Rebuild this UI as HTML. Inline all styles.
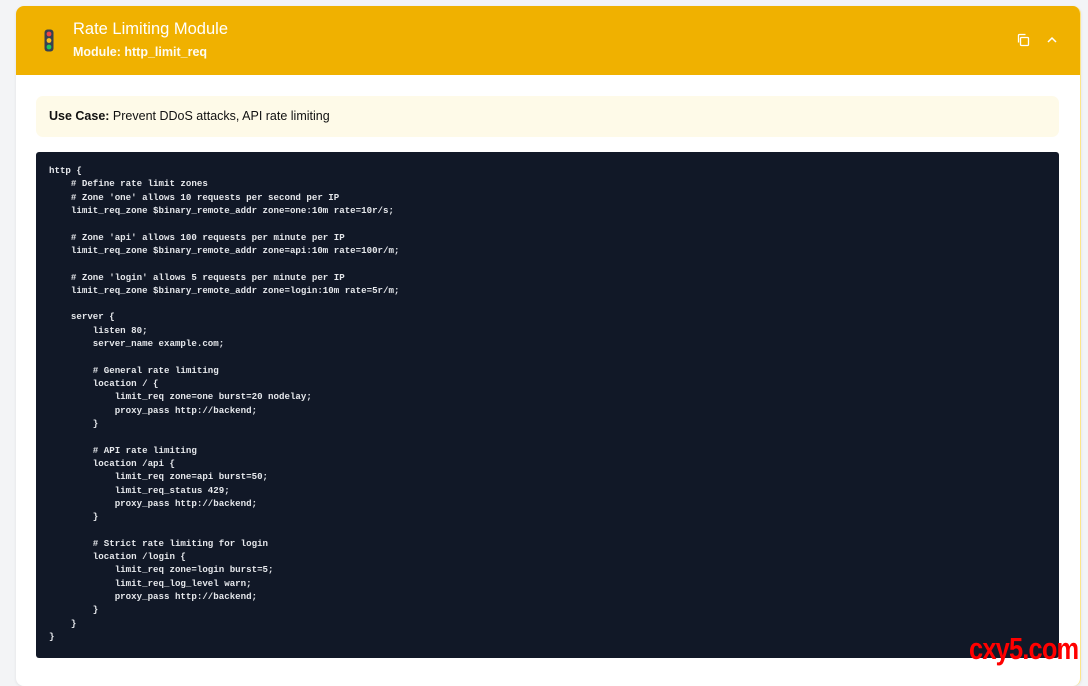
<!DOCTYPE html>
<html><head><meta charset="utf-8"><style>
body{margin:0;width:1088px;height:670px;background:#f3f4f6;font-family:"Liberation Sans",sans-serif;overflow:hidden;position:relative}
.card{position:absolute;left:16px;top:6px;width:1064px;height:680px;background:#fff;border-radius:8px;border-right:1px solid #fde68a;overflow:hidden;box-shadow:0 1px 3px rgba(0,0,0,.08)}
.hdr{height:69px;background:#f0b100;position:relative}
.t1{position:absolute;left:57px;top:14px;color:#fff;font-size:16.5px}
.t2{position:absolute;left:57px;top:39px;color:#fff;font-size:12.5px;font-weight:bold;opacity:.95}
.uc{position:absolute;left:20px;top:90px;width:1023px;height:41px;background:#fefae8;border-radius:7px;font-size:12.5px;line-height:41px;padding-left:13px;box-sizing:border-box;color:#111}
pre{position:absolute;left:20px;top:146px;width:1023px;height:506px;margin:0;background:#111827;border-radius:3px;color:#e5e7eb;font-family:"Liberation Mono",monospace;font-size:9.13px;font-weight:bold;line-height:13.32px;padding:12px 13px;box-sizing:border-box}
.wm{position:absolute;left:969px;top:631px;color:#f00;font-family:"Liberation Sans",sans-serif;font-weight:bold;font-size:31px;letter-spacing:-1px;transform:scaleX(.82);transform-origin:left}
</style></head><body>
<div class="card">
<div class="hdr">
<svg style="position:absolute;left:28px;top:23px" width="10" height="23" viewBox="0 0 10 23"><rect x="0.5" y="0.5" width="9" height="22" rx="3" fill="#374151"/><circle cx="5" cy="5" r="2.4" fill="#ef4444"/><circle cx="5" cy="11.5" r="2.4" fill="#fbbf24"/><circle cx="5" cy="18" r="2.4" fill="#22c55e"/></svg>
<div class="t1">Rate Limiting Module</div>
<div class="t2">Module: http_limit_req</div>
<svg style="position:absolute;left:1000px;top:27px" width="14" height="14" viewBox="0 0 14 14" fill="none" stroke="#fff" stroke-width="1.3"><rect x="4.5" y="4.5" width="8" height="8" rx="1"/><path d="M2.5 9.5V2.5a1 1 0 0 1 1-1h6"/></svg>
<svg style="position:absolute;left:1030px;top:30px" width="12" height="8" viewBox="0 0 12 8" fill="none" stroke="#fff" stroke-width="1.5"><path d="M2 6l4-4 4 4"/></svg>
</div>
<div class="uc"><b>Use Case:</b> Prevent DDoS attacks, API rate limiting</div>
<pre>http {
    # Define rate limit zones
    # Zone 'one' allows 10 requests per second per IP
    limit_req_zone $binary_remote_addr zone=one:10m rate=10r/s;

    # Zone 'api' allows 100 requests per minute per IP
    limit_req_zone $binary_remote_addr zone=api:10m rate=100r/m;

    # Zone 'login' allows 5 requests per minute per IP
    limit_req_zone $binary_remote_addr zone=login:10m rate=5r/m;

    server {
        listen 80;
        server_name example.com;

        # General rate limiting
        location / {
            limit_req zone=one burst=20 nodelay;
            proxy_pass http://backend;
        }

        # API rate limiting
        location /api {
            limit_req zone=api burst=50;
            limit_req_status 429;
            proxy_pass http://backend;
        }

        # Strict rate limiting for login
        location /login {
            limit_req zone=login burst=5;
            limit_req_log_level warn;
            proxy_pass http://backend;
        }
    }
}</pre>
</div>
<div class="wm">cxy5.com</div>
</body></html>
